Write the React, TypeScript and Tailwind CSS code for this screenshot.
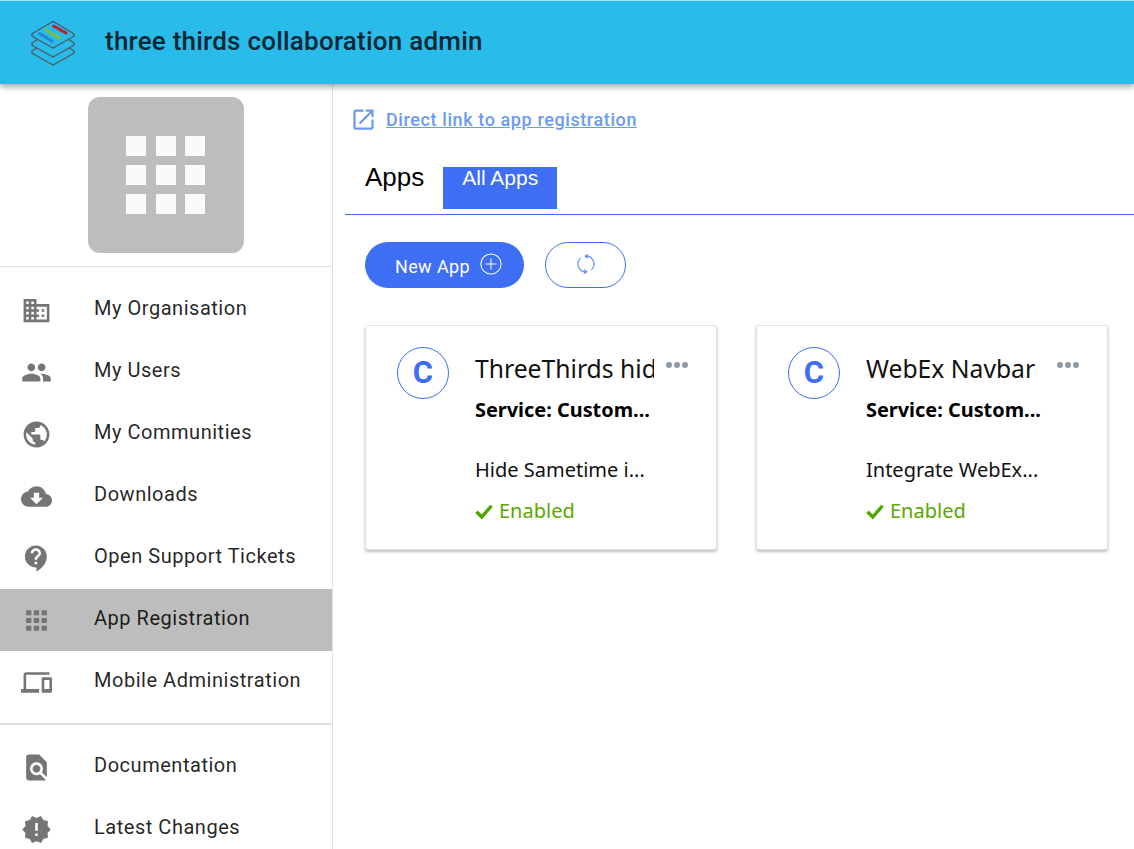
import React from "react";

const P: Record<string, string> = {
  domain: "M12 7V3H2v18h20V7H12zM6 19H4v-2h2v2zm0-4H4v-2h2v2zm0-4H4V9h2v2zm0-4H4V5h2v2zm4 12H8v-2h2v2zm0-4H8v-2h2v2zm0-4H8V9h2v2zm0-4H8V5h2v2zm10 12h-8v-2h2v-2h-2v-2h2v-2h-2V9h8v10zm-2-8h-2v2h2v-2zm0 4h-2v2h2v-2z",
  people: "M16 11c1.66 0 2.99-1.34 2.99-3S17.66 5 16 5c-1.66 0-3 1.34-3 3s1.34 3 3 3zm-8 0c1.66 0 2.99-1.34 2.99-3S9.66 5 8 5C6.34 5 5 6.34 5 8s1.34 3 3 3zm0 2c-2.33 0-7 1.17-7 3.5V19h14v-2.5c0-2.33-4.67-3.5-7-3.5zm8 0c-.29 0-.62.02-.97.05 1.16.84 1.97 1.97 1.97 3.45V19h6v-2.5c0-2.33-4.67-3.5-7-3.5z",
  public: "M12 2C6.48 2 2 6.48 2 12s4.48 10 10 10 10-4.48 10-10S17.52 2 12 2zm-1 17.93c-3.95-.49-7-3.85-7-7.93 0-.62.08-1.21.21-1.79L9 15v1c0 1.1.9 2 2 2v1.93zm6.9-2.54c-.26-.81-1-1.39-1.9-1.39h-1v-3c0-.55-.45-1-1-1H8v-2h2c.55 0 1-.45 1-1V7h2c1.1 0 2-.9 2-2v-.41c2.93 1.19 5 4.06 5 7.41 0 2.08-.8 3.97-2.1 5.39z",
  cloud: "M19.35 10.04C18.67 6.59 15.64 4 12 4 9.11 4 6.6 5.64 5.35 8.04 2.34 8.36 0 10.91 0 14c0 3.31 2.69 6 6 6h13c2.76 0 5-2.24 5-5 0-2.64-2.05-4.78-4.65-4.96zM17 13l-5 5-5-5h3V9h4v4h3z",
  support: "M11.5 2C6.81 2 3 5.81 3 10.5S6.81 19 11.5 19h.5v3c4.86-2.34 8-7 8-11.5C20 5.81 16.19 2 11.5 2zm1 14.5h-2v-2h2v2zm0-3.5h-2c0-3.25 3-3 3-5 0-1.1-.9-2-2-2s-2 .9-2 2h-2c0-2.21 1.79-4 4-4s4 1.79 4 4c0 2.5-3 2.75-3 5z",
  apps: "M4 8h4V4H4v4zm6 12h4v-4h-4v4zm-6 0h4v-4H4v4zm0-6h4v-4H4v4zm6 0h4v-4h-4v4zm6-10v4h4V4h-4zm-6 4h4V4h-4v4zm6 6h4v-4h-4v4zm0 6h4v-4h-4v4z",
  devices: "M4 6h18V4H4c-1.1 0-2 .9-2 2v11H0v3h14v-3H4V6zm19 2h-6c-.55 0-1 .45-1 1v10c0 .55.45 1 1 1h6c.55 0 1-.45 1-1V9c0-.55-.45-1-1-1zm-1 9h-4v-7h4v7z",
  find: "M20 19.59V8l-6-6H6c-1.1 0-1.99.9-1.99 2L4 20c0 1.1.89 2 1.99 2H18c.45 0 .85-.15 1.19-.4l-4.43-4.43c-.8.52-1.74.83-2.76.83-2.76 0-5-2.24-5-5s2.24-5 5-5 5 2.24 5 5c0 1.02-.31 1.96-.83 2.75L20 19.59zM9 13c0 1.66 1.34 3 3 3s3-1.34 3-3-1.34-3-3-3-3 1.34-3 3z",
  release: "M23 12l-2.44-2.78.34-3.68-3.61-.82-1.89-3.18L12 3 8.6 1.54 6.71 4.72l-3.61.81.34 3.68L1 12l2.44 2.78-.34 3.69 3.61.82 1.89 3.18L12 21l3.4 1.46 1.89-3.18 3.61-.82-.34-3.68L23 12zm-10 5h-2v-2h2v2zm0-4h-2V7h2v6z",
};

function NavItem({ icon, label, active }: { icon: string; label: string; active?: boolean }) {
  return (
    <div className={`flex items-center h-[62px] ${active ? "bg-[#bdbdbd]" : ""}`}>
      <svg viewBox="0 0 24 24" className="w-[31px] h-[31px] ml-[21px] shrink-0 fill-[#757575]">
        <path d={P[icon]} />
      </svg>
      <span className="ml-[42px] -mt-[4px] text-[20px] leading-[28px] text-[rgba(0,0,0,0.87)] tracking-[0.53px] whitespace-nowrap">{label}</span>
    </div>
  );
}

function Logo() {
  return (
    <svg viewBox="0 0 48 48" className="w-[48px] h-[48px]" fill="none">
      <path d="M24 19.5 L44.5 31.5 Q46 33 44.5 34.5 L25 45.5 Q24 46 23 45.5 L3.5 34.5 Q2 33 3.5 31.5 Z" stroke="#4d5b63" strokeWidth="1.4" strokeLinejoin="round" />
      <path d="M24 11.5 L44.5 23.5 Q46 25 44.5 26.5 L25 37.5 Q24 38 23 37.5 L3.5 26.5 Q2 25 3.5 23.5 Z" stroke="#4d5b63" strokeWidth="1.4" fill="#29bbe9" strokeLinejoin="round" />
      <path d="M23 3 Q24 2.5 25 3 L44.5 14.5 Q46 16 44.5 17.5 L25 28.5 Q24 29 23 28.5 L3.5 17.5 Q2 16 3.5 14.5 Z" stroke="#4d5b63" strokeWidth="1.4" fill="#29bbe9" strokeLinejoin="round" />
      <path d="M24.5 7 L37 14" stroke="#b8202c" strokeWidth="3" strokeLinecap="round" />
      <path d="M17 11 L30 19" stroke="#85bb3f" strokeWidth="3" strokeLinecap="round" />
      <path d="M10.5 14.5 L23 22" stroke="#2a83d0" strokeWidth="3" strokeLinecap="round" />
    </svg>
  );
}

function Card({ title, desc }: { title: string; desc: string }) {
  return (
    <div className="relative w-[352px] h-[225px] bg-white rounded-[3px] border border-[#e2e2e2] shadow-[0_2px_3px_rgba(0,0,0,0.25)] flex font-['Noto_Sans',sans-serif]">
      <div className="w-[52px] h-[52px] mt-[21px] ml-[31px] rounded-full border border-[#3e6ef3] flex items-center justify-center text-[#3e6ef3] text-[31px] font-bold font-['Roboto',sans-serif] shrink-0">
        C
      </div>
      <div className="ml-[26px] pt-[25px] w-[179px]">
        <div className="text-[24.7px] leading-[36px] text-[#111] overflow-hidden whitespace-nowrap w-[179px]">{title}</div>
        <div className="text-[19.9px] leading-[26px] mt-[10px] font-bold text-black whitespace-nowrap">Service: Custom...</div>
        <div className="text-[20px] leading-[26px] mt-[34px] text-[#111] whitespace-nowrap">{desc}</div>
        <div className="flex items-center mt-[15px] text-[#5aa700] text-[20px] leading-[26px]">
          <svg viewBox="0 0 24 24" className="w-[18px] h-[18px] fill-none stroke-[#4fa600] stroke-[4.5] mr-[6px]">
            <path d="M2 13 L9 20 L22 5" />
          </svg>
          Enabled
        </div>
      </div>
      <div className="absolute top-[36px] right-[28px] flex gap-[2px]">
        <span className="w-[6px] h-[6px] rounded-full bg-[#8d9aa6]" />
        <span className="w-[6px] h-[6px] rounded-full bg-[#8d9aa6]" />
        <span className="w-[6px] h-[6px] rounded-full bg-[#8d9aa6]" />
      </div>
    </div>
  );
}

export default function App() {
  return (
    <div className="w-[1134px] h-[849px] overflow-hidden bg-white flex flex-col font-['Roboto',sans-serif]">
      <header className="relative z-10 h-[84px] shrink-0 bg-[#29bbe9] border-t border-[#a9e3f6] flex items-center shadow-[0_3px_6px_rgba(0,0,0,0.35)]">
        <div className="ml-[29px]"><Logo /></div>
        <h1 className="ml-[28px] -mt-[2px] text-[26px] font-medium tracking-[0.22px] text-[#0a2733] whitespace-nowrap">three thirds collaboration admin</h1>
      </header>
      <div className="flex flex-1 min-h-0">
        <aside className="w-[333px] shrink-0 border-r border-[#e0e0e0] flex flex-col">
          <div className="h-[183px] shrink-0 border-b border-[#e0e0e0] pt-[13px]">
            <div className="ml-[88px] w-[156px] h-[156px] pr-[1px] rounded-[12px] bg-[#bdbdbd] grid grid-cols-[20px_20px_20px] grid-rows-[20px_20px_20px] gap-[9.3px] content-center justify-center">
              {Array.from({ length: 9 }).map((_, i) => (
                <span key={i} className="bg-[#fafafa]" />
              ))}
            </div>
          </div>
          <nav className="pt-[12px] pb-[10px] border-b-2 border-[#e0e0e0]">
            <NavItem icon="domain" label="My Organisation" />
            <NavItem icon="people" label="My Users" />
            <NavItem icon="public" label="My Communities" />
            <NavItem icon="cloud" label="Downloads" />
            <NavItem icon="support" label="Open Support Tickets" />
            <NavItem icon="apps" label="App Registration" active />
            <NavItem icon="devices" label="Mobile Administration" />
          </nav>
          <div className="pt-[11px]">
            <NavItem icon="find" label="Documentation" />
            <NavItem icon="release" label="Latest Changes" />
          </div>
        </aside>
        <main className="flex-1 min-w-0">
          <a className="flex items-center ml-[17px] mt-[22px] h-[26px] text-[#6a9bf0]">
            <svg viewBox="0 0 24 24" className="w-[27px] h-[27px] fill-[#6a9bf0] shrink-0">
              <path d="M19 19H5V5h7V3H5c-1.11 0-2 .9-2 2v14c0 1.1.89 2 2 2h14c1.1 0 2-.9 2-2v-7h-2v7zM14 3v2h3.59l-9.83 9.83 1.41 1.41L19 6.41V10h2V3h-7z" />
            </svg>
            <span className="ml-[9px] text-[18px] font-medium underline tracking-[0.6px] whitespace-nowrap">Direct link to app registration</span>
          </a>
          <div className="mt-[35px] ml-[12px] h-[48px] border-b border-[#3e6ef3] flex items-start font-['Liberation_Sans',sans-serif]">
            <span className="ml-[20px] -mt-[1px] text-[26px] leading-[22px] text-black">Apps</span>
            <span className="ml-[19px] w-[114px] h-[42px] bg-[#3e6ef3] text-white text-[21px] leading-[22px] text-center">All Apps</span>
          </div>
          <div className="flex mt-[27px] ml-[32px] gap-[21px]">
            <button className="w-[159px] h-[46px] pl-[8px] rounded-full bg-[#3e6ef3] text-white text-[18px] tracking-[0.4px] flex items-center justify-center gap-[10px]">
              <span className="mt-[2px]">New App</span>
              <svg viewBox="0 0 24 24" className="w-[22px] h-[22px] -mt-[3px] fill-none stroke-white stroke-[1.1]">
                <circle cx="12" cy="12" r="11" />
                <path d="M12 6v12M6 12h12" />
              </svg>
            </button>
            <button className="w-[81px] h-[46px] rounded-full border border-[#3e6ef3] flex items-center justify-center">
              <svg viewBox="0 0 24 24" className="w-[20px] h-[20px] -mt-[2px] fill-none stroke-[#5f88f4] stroke-[1.3]">
                <path d="M18.5 19 A9.5 9.5 0 0 0 11 2.6 M14.5 0.5 L11 2.6 L14 5.5" />
                <path d="M5.5 5 A9.5 9.5 0 0 0 13 21.4 M9.5 23.5 L13 21.4 L10 18.5" />
              </svg>
            </button>
          </div>
          <div className="flex mt-[37px] ml-[32px] gap-[39px]">
            <Card title="ThreeThirds hide Sametime" desc="Hide Sametime i..." />
            <Card title="WebEx Navbar" desc="Integrate WebEx..." />
          </div>
        </main>
      </div>
    </div>
  );
}
